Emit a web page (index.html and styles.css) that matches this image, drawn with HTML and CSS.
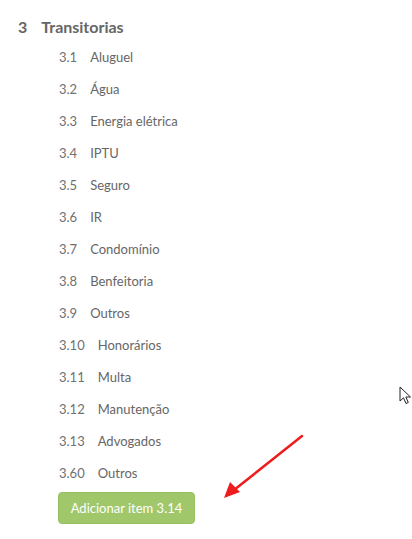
FILE: index.html
```html
<!DOCTYPE html>
<html lang="pt">
<head>
<meta charset="utf-8">
<link rel="stylesheet" href="styles.css">
</head>
<body>
<div class="page">
  <h2 class="section"><span class="sec-num">3</span><span class="sec-title">Transitorias</span></h2>
  <ul class="items">
    <li class="item"><span class="num">3.1</span><span class="label">Aluguel</span></li>
    <li class="item"><span class="num">3.2</span><span class="label">Água</span></li>
    <li class="item"><span class="num">3.3</span><span class="label">Energia elétrica</span></li>
    <li class="item"><span class="num">3.4</span><span class="label">IPTU</span></li>
    <li class="item"><span class="num">3.5</span><span class="label">Seguro</span></li>
    <li class="item"><span class="num">3.6</span><span class="label">IR</span></li>
    <li class="item"><span class="num">3.7</span><span class="label">Condomínio</span></li>
    <li class="item"><span class="num">3.8</span><span class="label">Benfeitoria</span></li>
    <li class="item"><span class="num">3.9</span><span class="label">Outros</span></li>
    <li class="item"><span class="num">3.10</span><span class="label">Honorários</span></li>
    <li class="item"><span class="num">3.11</span><span class="label">Multa</span></li>
    <li class="item"><span class="num">3.12</span><span class="label">Manutenção</span></li>
    <li class="item"><span class="num">3.13</span><span class="label">Advogados</span></li>
    <li class="item"><span class="num">3.60</span><span class="label">Outros</span></li>
  </ul>
  <div class="actions"><button class="btn-add">Adicionar item 3.14</button></div>

  <svg class="arrow" width="90" height="72" viewBox="0 0 90 72">
    <line x1="84" y1="6" x2="16" y2="60" stroke="#ee1c1c" stroke-width="2.5" stroke-linecap="round"/>
    <polygon points="6,68 12,52 22,62" fill="#ee1c1c"/>
  </svg>

  <svg class="cursor" width="14" height="20" viewBox="0 0 14 20">
    <path d="M1 1 L1 15 L4.5 11.8 L7 17.5 L9.3 16.5 L6.9 11 L11.5 11 Z" fill="#fff" stroke="#222" stroke-width="1" stroke-linejoin="round"/>
  </svg>
</div>
</body>
</html>
```

FILE: styles.css
```css
html, body {
  margin: 0;
  padding: 0;
  background: #ffffff;
}
body {
  font-family: Lato, "Open Sans", sans-serif;
  color: #666;
}
.page {
  position: relative;
  width: 412px;
  height: 539px;
  padding-top: 13px;
  box-sizing: border-box;
  overflow: hidden;
}
.section {
  margin: 0;
  padding-left: 18px;
  font-size: 16px;
  font-weight: 700;
  line-height: 28px;
  color: #666;
  display: flex;
}
.sec-num {
  margin-right: 14px;
}
.items {
  list-style: none;
  margin: 0;
  padding: 0 0 0 59px;
}
.item {
  display: flex;
  height: 32px;
  line-height: 32px;
  font-size: 13px;
  color: #6a6a6a;
}
.num {
  margin-right: 13px;
  color: #707070;
}
.label {
  color: #666;
}
.actions {
  padding-left: 58px;
  margin-top: 3px;
}
.btn-add {
  font-family: Lato, "Open Sans", sans-serif;
  font-size: 13px;
  color: #fff;
  background: #a0c76a;
  border: 1px solid #98bf62;
  border-radius: 4px;
  height: 32px;
  width: 137px;
  padding: 0;
}
.arrow {
  position: absolute;
  left: 218px;
  top: 430px;
}
.cursor {
  position: absolute;
  left: 399px;
  top: 386px;
}
```
